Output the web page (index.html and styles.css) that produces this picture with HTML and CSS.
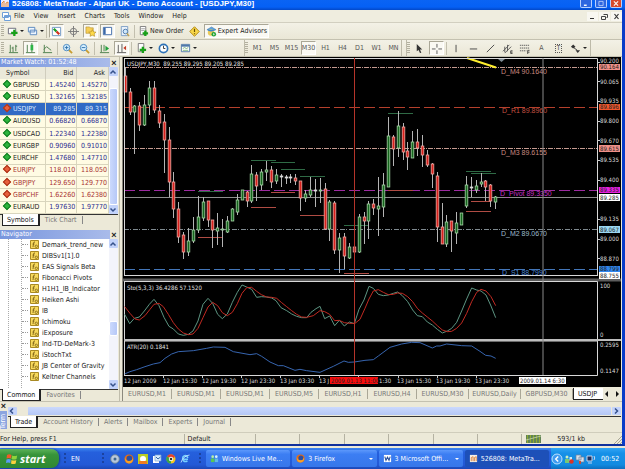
FILE: index.html
```html
<!DOCTYPE html>
<html lang="en">
<head>
<meta charset="utf-8">
<title>526808: MetaTrader - Alpari UK - Demo Account - [USDJPY,M30]</title>
<link rel="stylesheet" href="styles.css">
</head>
<body>
<div class="desktop">
<div class="window">
  <header class="titlebar">
    <svg class="app-icon" viewBox="0 0 8 8"><path d="M0 0h8v7H0z" fill="#eef"/><path d="M1 7V3l2-2v6M5 7V3l2-1v5" stroke="#e0883c" fill="none"/></svg>
    <h1>526808: MetaTrader - Alpari UK - Demo Account - [USDJPY,M30]</h1>
    <div class="caption">
      <button aria-label="Minimize"><svg viewBox="0 0 10 10"><path d="M2 7.500h4" stroke="#fff" stroke-width="2"/></svg></button>
      <button aria-label="Restore"><svg viewBox="0 0 10 10"><path d="M2 2h6v6H2z" stroke="#d5e4ff" fill="none"/></svg></button>
      <button class="close" aria-label="Close"><svg viewBox="0 0 10 10"><path d="M2 2l6 6M8 2l-6 6" stroke="#fff" stroke-width="1.500"/></svg></button>
    </div>
  </header>

  <nav class="menubar">
    <svg class="doc-icon" viewBox="0 0 9 9"><path d="M.5.5h6v5h-6zM2.500 3.500h6v5h-6z" fill="#fff" stroke="#6e9fd8"/><path d="M3 4.500h5" stroke="#6e9fd8"/></svg>
    <button>File</button><button>View</button><button>Insert</button><button>Charts</button><button>Tools</button><button>Window</button><button>Help</button>
    <div class="mdi">
      <button aria-label="Minimize chart"><svg viewBox="0 0 9 9"><path d="M2 6.500h4" stroke="#333"/></svg></button>
      <button aria-label="Restore chart"><svg viewBox="0 0 9 9"><path d="M3.500 2.500h4v3h-1M1.500 4.500h4v3h-4z" fill="none" stroke="#444"/></svg></button>
      <button aria-label="Close chart"><svg viewBox="0 0 9 9"><path d="M2.500 2l4 5M6.500 2l-4 5" stroke="#333" stroke-width="1.200"/></svg></button>
    </div>
  </nav>

  <div class="toolbar first">
    <i class="grip"></i>
    <button class="drop" aria-label="New chart"><svg viewBox="0 0 12 12"><path d="M1.500 2.500h8v6h-8z" fill="#fff" stroke="#667"/><path d="M8 4v7M4.500 7.500h7" stroke="#18a018" stroke-width="2.500"/></svg></button>
    <button class="drop" aria-label="Profiles"><svg viewBox="0 0 12 12"><path d="M1.500 1.500h7v5h-7zM3.500 4.500h7v5h-7z" fill="#eef6ff" stroke="#5686bd"/></svg></button>
    <i class="sep"></i>
    <button class="on" aria-label="Market watch"><svg viewBox="0 0 12 12"><path d="M1.500 1.500h9v9h-9z" fill="#fff" stroke="#6b94c4"/><path d="M3 3l3 3" stroke="#1a9c28" stroke-width="2.500"/><path d="M6 6l3 3" stroke="#d03420" stroke-width="2.500"/></svg></button>
    <button aria-label="Data window"><svg viewBox="0 0 12 12"><circle cx="6" cy="6" r="3.500" fill="none" stroke="#777"/><path d="M6 0v12M0 6h12" stroke="#777"/></svg></button>
    <button class="on" aria-label="Navigator"><svg viewBox="0 0 12 12"><path d="M1 1h4l1 1h3v6H1z" fill="#f6ce55" stroke="#ad8a28" stroke-width=".6"/><path d="M8 4l1.200 2.400 2.800.3-2 1.800.5 2.800L8 10l-2.500 1.300.5-2.800-2-1.800 2.800-.3z" fill="#ffdc4b" stroke="#a8801c" stroke-width=".6"/></svg></button>
    <button class="on" aria-label="Terminal"><svg viewBox="0 0 12 12"><path d="M1.500 1.500h9v8h-9z" fill="#fff" stroke="#3b68a8"/><path d="M2 2h2v7H2z" fill="#3b68a8"/></svg></button>
    <button aria-label="Strategy tester"><svg viewBox="0 0 12 12"><path d="M2.500.5h7v10h-7z" fill="#e9f1fa" stroke="#7a9dc4"/><circle cx="7" cy="6" r="2.500" fill="#cfe8fb" stroke="#4a76a8"/><path d="M8.500 8l2.500 3" stroke="#c3a04c" stroke-width="1.500"/></svg></button>
    <i class="sep"></i>
    <button class="label"><svg viewBox="0 0 12 12"><path d="M2.500.5h6v9h-6z" fill="#fff" stroke="#777"/><path d="M3.500 3h4M3.500 5h3" stroke="#999"/><path d="M8 5v6M5 8h6" stroke="#18a018" stroke-width="2.500"/></svg>New Order</button>
    <button aria-label="MetaEditor"><svg viewBox="0 0 12 12"><path d="M6 .8L11.200 6 6 11.200.8 6z" fill="#f8d648" stroke="#b08510"/><path d="M6 3v3.500M6 8v1" stroke="#6b5000" stroke-width="1.300"/></svg></button>
    <button class="label on"><svg viewBox="0 0 12 12"><path d="M1 4l5-3 5 3-5 2z" fill="#5aa2df" stroke="#316aa0" stroke-width=".5"/><circle cx="5.500" cy="7" r="3.500" fill="#eccb5a"/><path d="M2 5q4 2 7 0v-1H2z" fill="#3b87cc"/><circle cx="8.500" cy="9" r="2.500" fill="#22a43a"/><path d="M8 7.700l1.600 1.300L8 10.300z" fill="#fff"/></svg>Expert Advisors</button>
  </div>

  <div class="toolbar">
    <i class="grip"></i>
    <button aria-label="Bar chart"><svg viewBox="0 0 12 12"><path d="M2.500 2v8M1 10.500h10M5.500 4v6M5.500 5.500H4M8.500 2v7M8.500 3.500H10" fill="none" stroke="#467b46"/></svg></button>
    <button class="on" aria-label="Candlesticks"><svg viewBox="0 0 12 12"><path d="M2.500 2v8M1 10.500h10M7.500 0v10" fill="none" stroke="#467b46"/><path d="M6 2h3v6H6z" fill="#2db447"/></svg></button>
    <button aria-label="Line chart"><svg viewBox="0 0 12 12"><path d="M2.500 2v8M1 10.500h10M2 7l3-3 5 4" fill="none" stroke="#467b46"/></svg></button>
    <i class="sep"></i>
    <button aria-label="Zoom in"><svg viewBox="0 0 12 12"><path d="M7 7l4 4" stroke="#c79d30" stroke-width="2"/><circle cx="5" cy="5" r="3.500" fill="#d6efff" stroke="#4586bf"/><path d="M5 3v4M3 5h4" stroke="#2c6ea8"/></svg></button>
    <button aria-label="Zoom out"><svg viewBox="0 0 12 12"><path d="M7 7l4 4" stroke="#c79d30" stroke-width="2"/><circle cx="5" cy="5" r="3.500" fill="#d6efff" stroke="#4586bf"/><path d="M3 5h4" stroke="#2c6ea8"/></svg></button>
    <i class="sep"></i>
    <button aria-label="Auto scroll"><svg viewBox="0 0 12 12"><path d="M2.500 2v8M1 10.500h10M5.500 2v7" fill="none" stroke="#467b46"/><path d="M7 3l4 3-4 3z" fill="#22a23c"/></svg></button>
    <button class="on" aria-label="Chart shift"><svg viewBox="0 0 12 12"><path d="M2.500 2v8M1 10.500h10M6.500 1v9" fill="none" stroke="#555"/><path d="M11 3L8 5.500 11 8z" fill="#c33b25"/></svg></button>
    <i class="sep"></i>
    <button class="drop" aria-label="Indicators"><svg viewBox="0 0 12 12"><path d="M2.500.5h6v9h-6z" fill="#fff" stroke="#777"/><path d="M7.500 4v7M4 7.500h7" stroke="#18a018" stroke-width="2.500"/></svg></button>
    <button class="drop" aria-label="Periods"><svg viewBox="0 0 12 12"><circle cx="6" cy="6" r="4.500" fill="#fff" stroke="#2f73b8" stroke-width="1.800"/><path d="M6 3v3h2" fill="none" stroke="#333"/></svg></button>
    <button class="drop" aria-label="Templates"><svg viewBox="0 0 12 12"><path d="M1.500 1.500h9v8h-9z" fill="#fff" stroke="#5079a8"/><path d="M1.500 3h9" stroke="#5079a8" stroke-width="2"/><path d="M3 6l2-1 2 1 2-1M3 8h6" stroke="#5aa05a" fill="none" stroke-width=".8"/></svg></button>
    <div class="group frames">
      <i class="grip"></i>
      <button>M1</button><button>M5</button><button>M15</button><button class="on">M30</button><button>H1</button><button>H4</button><button>D1</button><button>W1</button><button>MN</button>
    </div>
    <div class="group draw">
      <i class="grip"></i>
      <button aria-label="Cursor"><svg viewBox="0 0 12 12"><path d="M3 1l6 6H6.500L8 10.500 6.500 11 5 7.500 3 9z" fill="#333"/></svg></button>
      <button class="on" aria-label="Crosshair"><svg viewBox="0 0 12 12"><path d="M6.500 1v4M6.500 8v4M1 6.500h4M8 6.500h4" stroke="#555"/></svg></button>
      <i class="sep"></i>
      <button aria-label="Vertical line"><svg viewBox="0 0 12 12"><path d="M5.500 2v8" stroke="#444"/></svg></button>
      <button aria-label="Horizontal line"><svg viewBox="0 0 12 12"><path d="M2 6.500h8" stroke="#444"/></svg></button>
      <button aria-label="Trendline"><svg viewBox="0 0 12 12"><path d="M2 10l8-8" stroke="#444"/></svg></button>
      <button aria-label="Channel"><svg viewBox="0 0 12 12"><path d="M1 9l7-7M3 11l7-7M3 4v6M6 2v7" stroke="#555"/><path d="M11.500 8.500H9.500v3h2M9.500 10h2" stroke="#222" fill="none" stroke-width=".8"/></svg></button>
      <button aria-label="Fibonacci"><svg viewBox="0 0 12 12"><path d="M1 2.500h10M1 5.500h10M1 8.500h7" stroke="#555" stroke-dasharray="1.500 .7"/><path d="M11.500 8H9.500v4M9.500 10h2" stroke="#222" fill="none" stroke-width=".8"/></svg></button>
      <button>A</button>
      <button><span class="text-tool">T</span></button>
      <button class="drop" aria-label="Arrows"><svg viewBox="0 0 12 12"><path d="M1 4l2.500-2.500L6 4 3.500 6z M6 8h5l-2.500 3z" fill="#333"/><path d="M4 5l4 3" stroke="#333"/></svg></button>
    </div>
  </div>

  <main class="workspace">
    <aside class="side">
      <section class="panel">
        <div class="panel-head"><h2>Market Watch: 01:52:48</h2><button aria-label="Close market watch">×</button></div>
        <div class="scroll-area quotes">
          <table>
            <thead><tr><th>Symbol</th><th>Bid</th><th>Ask</th></tr></thead>
            <tbody>
              <tr><td class="up">GBPUSD</td><td>1.45240</td><td>1.45270</td></tr>
              <tr><td class="up">EURUSD</td><td>1.32165</td><td>1.32185</td></tr>
              <tr class="selected"><td class="down">USDJPY</td><td>89.285</td><td>89.315</td></tr>
              <tr><td class="up">AUDUSD</td><td>0.66820</td><td>0.66870</td></tr>
              <tr><td class="up">USDCAD</td><td>1.22340</td><td>1.22380</td></tr>
              <tr><td class="up">EURGBP</td><td>0.90960</td><td>0.91010</td></tr>
              <tr><td class="up">EURCHF</td><td>1.47680</td><td>1.47710</td></tr>
              <tr class="falling"><td class="down">EURJPY</td><td>118.010</td><td>118.050</td></tr>
              <tr class="falling"><td class="down">GBPJPY</td><td>129.650</td><td>129.770</td></tr>
              <tr class="falling"><td class="down">GBPCHF</td><td>1.62260</td><td>1.62380</td></tr>
              <tr><td class="up">EURAUD</td><td>1.97630</td><td>1.97770</td></tr>
            </tbody>
          </table>
          <div class="scrollbar"><button aria-label="Scroll up"><svg viewBox="0 0 8 8"><path d="M1.500 5.500L4 3l2.500 2.500" /></svg></button><i class="thumb high"></i><button aria-label="Scroll down"><svg viewBox="0 0 8 8"><path d="M1.500 2.500L4 5l2.500-2.500"/></svg></button></div>
        </div>
        <div class="tabs"><button class="active">Symbols</button><button>Tick Chart</button></div>
      </section>
      <section class="panel">
        <div class="panel-head"><h2>Navigator</h2><button aria-label="Close navigator">×</button></div>
        <div class="scroll-area tree">
          <ul>
            <li>Demark_trend_new</li><li>DIBSv1[1].0</li><li>EAS Signals Beta</li><li>Fibonacci Pivots</li><li>H1H1_IB_Indicator</li><li>Heiken Ashi</li><li>IB</li><li>Ichimoku</li><li>iExposure</li><li>Ind-TD-DeMark-3</li><li>iStochTxt</li><li>JB Center of Gravity</li><li>Keltner Channels</li>
          </ul>
          <div class="scrollbar"><button aria-label="Scroll up"><svg viewBox="0 0 8 8"><path d="M1.500 5.500L4 3l2.500 2.500"/></svg></button><i class="thumb low"></i><button aria-label="Scroll down"><svg viewBox="0 0 8 8"><path d="M1.500 2.500L4 5l2.500-2.500"/></svg></button></div>
        </div>
        <div class="tabs"><button class="active">Common</button><button>Favorites</button></div>
      </section>
    </aside>

    <section class="charts">
      <svg class="chart" viewBox="123 57 498 330" role="img" aria-label="USDJPY M30 chart">
        <path d="M123 57h498v330H123z" fill="#000"/>
        <g fill="none" stroke-width="1">
          <path d="M124 67.500H597M124 148.500H597" stroke="#c49a90" stroke-dasharray="5 1 1 1"/>
          <path d="M124 107.500H597" stroke="#b5402c" stroke-dasharray="11 4"/>
          <path d="M124 190.500H597" stroke="#9d2ba0" stroke-dasharray="11 4"/>
          <path d="M124 197.500H597" stroke="#8f8f8f"/>
          <path d="M124 229.500H597" stroke="#7f8a90" stroke-dasharray="5 1 1 2"/>
          <path d="M124 269.500H597" stroke="#4275b8" stroke-dasharray="11 4"/>
          <path d="M251 160.500h25M271 162.500h24M281 169.500h24M300 176.500h25M388 113.500h25M344 225.500h25M466 171.500h25M471 173.500h25M198 191.500h25" stroke="#2f6a45"/>
          <path d="M198 237.500h25M251 207.500h25M271 192.500h24M300 215.500h25M388 190.500h25M344 273.500h25M471 201.500h20M466 211.500h25" stroke="#b04c44"/>
        </g>
        <g id="candles"></g>
        <path d="M467 58l29 9.500" stroke="#ffee2e" stroke-width="2"/>
        <path d="M498 59h7l-3.500 3z" fill="#7d8a92"/>
        <g class="levels">
          <text x="501" y="74" fill="#c98a80">D_M4 90.1640</text>
          <text x="502" y="113" fill="#c25040">D_R1 89.8960</text>
          <text x="501" y="155" fill="#c98a80">D_M3 89.6155</text>
          <text x="500" y="196" fill="#c52fc5">D_Pivot 89.3350</text>
          <text x="501" y="236" fill="#9dbccc">D_M2 89.0670</text>
          <text x="502" y="275" fill="#4a86d8">D_S1 88.7990</text>
        </g>
        <path d="M123 276.500h498" stroke="#000" stroke-width="3"/>
        <path d="M123 280h498" stroke="#5c5c5c" stroke-width="3"/>
        <path d="M124 275.500h473M124.500 58v217.500M124 58.500h473.500V276M124 281.500h473.500V339M124 339.500h473.500M124 341h473.500V375.500H124M124.500 282v93" fill="none" stroke="#d8d8d8"/>
        <path d="M124 340h497" stroke="#bdbdbd" stroke-width="2"/>
        <path d="M163.500 375v3M202.500 375v3M241.500 375v3M280.500 375v3M319.500 375v3M358.500 375v3M398.500 375v3M437.500 375v3M476.500 375v3" stroke="#ccc"/>
        <path d="M597 62.500h3M597 81.500h3M597 101.500h3M597 121.500h3M597 140.500h3M597 160.500h3M597 180.500h3M597 219.500h3M597 239.500h3M597 258.500h3" stroke="#ccc"/>
        <g fill="none" stroke-width="3" transform="translate(120 275) scale(.33333)">
          <polyline stroke="#5d9683" points="14,118 29,146 43,130 58,126 73,108 88,88 102,73 117,92 132,127 147,154 160,162 175,177 190,181 205,178 219,168 234,138 249,88 264,70 278,85 293,118 307,131 322,117 337,82 352,52 366,30 380,36 395,43 410,67 424,65 440,66 455,69 468,77 483,98 500,107 515,117 530,124 545,128 560,128 573,112 588,101 600,94 614,131 629,123 644,152 658,136 673,153 688,141 703,146 717,103 732,75 747,34 760,40 775,58 790,62 805,60 820,55 833,51 847,62 863,80 878,105 892,122 907,125 922,141 937,150 952,163 967,174 982,168 995,160 1010,142 1025,108 1040,72 1055,39 1070,45 1083,48 1098,60 1113,93 1127,128"/>
          <polyline stroke="#c22a22" points="14,95 30,115 45,132 58,135 75,122 90,103 102,88 117,85 130,95 145,118 160,143 175,162 190,174 205,179 219,177 234,160 249,128 264,96 278,82 293,92 307,113 322,122 337,112 352,86 366,55 380,38 395,37 410,49 424,59 440,66 455,67 470,70 485,83 500,95 515,107 530,118 545,126 560,127 580,122 600,107 614,110 629,118 644,137 658,136 673,143 690,145 705,145 720,133 735,100 747,72 760,48 775,44 790,52 805,59 820,58 833,54 847,55 863,65 878,80 892,100 907,114 922,126 937,138 952,152 967,165 982,170 995,169 1010,160 1025,144 1040,115 1055,80 1070,52 1083,43 1098,48 1113,65 1127,92"/>
          <polyline stroke="#3765b0" points="14,297 30,290 50,284 75,275 100,267 120,263 135,250 155,237 175,230 220,227 260,220 280,216 315,217 340,230 390,239 410,236 425,244 450,261 475,272 490,272 525,286 540,283 560,287 600,292 640,274 672,258 685,262 703,261 735,256 760,254 775,243 810,217 845,207 875,202 900,203 937,219 950,213 960,213 980,207 1025,212 1055,213 1080,229 1097,241 1113,243 1127,250"/>
        </g>
        <path d="M354.500 58v317" stroke="#b5342a"/>
        <path d="M543 58v317" stroke="#8a8a8a"/>
        <g class="readout">
          <text x="127" y="66">USDJPY,M30  89.255 89.295 89.205 89.285</text>
          <text x="127" y="290">Sto(5,3,3) 36.4286 57.1520</text>
          <text x="127" y="349">ATR(20) 0.1841</text>
        </g>
        <g class="axis">
          <text x="600" y="63">90.200</text><text x="600" y="84">90.065</text><text x="600" y="103">89.935</text><text x="600" y="123">89.800</text><text x="600" y="143">89.670</text><text x="600" y="162">89.535</text><text x="600" y="182">89.400</text><text x="600" y="221">89.135</text><text x="600" y="241">89.000</text><text x="600" y="261">88.870</text>
          <text x="600" y="288">100</text><text x="600" y="337">0</text><text x="600" y="347">0.2595</text><text x="600" y="373">0.1147</text>
          <text x="124" y="383">12 Jan 2009</text><text x="163" y="383">12 Jan 15:30</text><text x="202" y="383">12 Jan 19:30</text><text x="241" y="383">12 Jan 23:30</text><text x="280" y="383">13 Jan 03:30</text><text x="319" y="383">13 J</text><text x="379" y="383">1:30</text><text x="397" y="383">13 Jan 15:30</text><text x="436" y="383">13 Jan 19:30</text><text x="475" y="383">13 Jan 23:30</text>
        </g>
        <path d="M599 64h21v6h-21zM599 145h21v7h-21z" fill="#f09088"/>
        <path d="M599 104h21v6h-21z" fill="#f0562c"/>
        <path d="M599 187h21v6h-21z" fill="#e81fe0"/>
        <path d="M599 194h21v7h-21zM599 272h21v7h-21zM519 377h47v7h-47z" fill="#fff"/>
        <path d="M599 226h21v7h-21z" fill="#9bd8f2"/>
        <path d="M599 266h21v6h-21z" fill="#2f86ee"/>
        <path d="M330 377h48v7h-48z" fill="#f80c0c"/>
        <g class="axis tags">
          <text x="600" y="69">90.164</text><text x="600" y="109">89.896</text><text x="600" y="151">89.615</text><text x="600" y="192">89.335</text><text x="600" y="200">89.285</text><text x="600" y="232">89.067</text><text x="600" y="271">88.799</text><text x="600" y="278">88.755</text>
          <text x="331" y="383">2009.01.13 11:00</text><text x="520" y="383">2009.01.14 6:30</text>
        </g>
      </svg>
      <div class="chart-tabs">
        <button>EURUSD,M1</button><button>EURUSD,M1</button><button>EURUSD,M1</button><button>EURUSD,M5</button><button>EURUSD,H1</button><button>EURUSD,H4</button><button class="wide">EURUSD,M30</button><button class="wide">EURUSD,Daily</button><button class="wide">GBPUSD,M30</button><button class="active">USDJP</button>
        <div class="pager"><button aria-label="Previous tabs"><svg viewBox="0 0 6 8"><path d="M4 1v6L1 4z"/></svg></button><button aria-label="Next tabs"><svg viewBox="0 0 6 8"><path d="M2 1v6l3-3z"/></svg></button></div>
      </div>
    </section>
  </main>

  <section class="terminal">
    <div class="gutter"><button aria-label="Close terminal">×</button><span>Term</span></div>
    <div class="terminal-body">
      <div class="hscroll"><button aria-label="Scroll left"><svg viewBox="0 0 8 8"><path d="M5 1.500L2.500 4 5 6.500"/></svg></button><i></i><button aria-label="Scroll right"><svg viewBox="0 0 8 8"><path d="M3 1.500L5.500 4 3 6.500"/></svg></button></div>
      <div class="tabs"><button class="active">Trade</button><button>Account History</button><button>Alerts</button><button>Mailbox</button><button>Experts</button><button>Journal</button></div>
    </div>
  </section>

  <footer class="status">
    <span class="help">For Help, press F1</span><span class="profile">Default</span><span></span><span></span><span></span><span></span><span></span><span></span>
    <span class="traffic"><svg viewBox="0 0 15 8"><path d="M0 0h15v8H0z" fill="#315e78"/><path d="M1.500 0v8M4.500 0v8M7.500 0v8M10.500 0v8M13.500 0v8" stroke="#8fa832" stroke-width="2"/><path d="M0 5L15 1" stroke="#d5dfb8" stroke-width=".7"/></svg>593/1 kb</span>
    <svg class="resize" viewBox="0 0 9 9"><path d="M1 9l8-8M4 9l5-5M7 9l2-2" stroke="#a8a594"/></svg>
  </footer>
</div>

<div class="taskbar">
  <button class="start"><svg viewBox="0 0 12 12"><path d="M1 2q2-1.500 4.500 0L5 5.500Q3 4.500.5 5.500z" fill="#f25a29"/><path d="M6.200 2.500q2 1 5 0L10.500 6q-2.500 1-5 0z" fill="#8fd33b"/><path d="M.5 6.500q2.500-1 4.300 0L4.300 10Q2 9 0 10z" fill="#5c9bf5"/><path d="M5.500 7q2.500 1 4.800 0L9.700 10.500q-2.500 1-4.700 0z" fill="#fbd13f"/></svg>start</button>
  <i class="dots"></i><span class="lang">EN</span><i class="dots"></i>
  <div class="quick">
    <button aria-label="Media"><svg viewBox="0 0 10 10"><circle cx="5" cy="5" r="4.300" fill="#b9c8da" stroke="#66809c"/><circle cx="5" cy="5" r="1.500" fill="#3d658f"/></svg></button>
    <button aria-label="Firefox"><svg viewBox="0 0 10 10"><circle cx="5" cy="5" r="4.500" fill="#e86c12"/><circle cx="5.400" cy="4.400" r="2.800" fill="#2c4fa3"/><path d="M1 2q0 5 4 5 3 0 4-3Q9.500 9 5 9.500 0 9 1 2z" fill="#f7a228"/></svg></button>
    <button aria-label="Messenger"><svg viewBox="0 0 10 10"><path d="M0 0h10v10H0z" fill="#b8cd24"/><circle cx="5" cy="5" r="3" fill="#fff"/><path d="M1 7h8v3H1z" fill="#ef7d20"/></svg></button>
    <button aria-label="Mail"><svg viewBox="0 0 10 10"><path d="M1 2h6v7H1z" fill="#fff"/><path d="M3 1h6v6H3z" fill="#d9ebff" stroke="#7aa3cf" stroke-width=".7"/><path d="M4 3l2 2 2.500-2" stroke="#2f66a4" fill="none"/></svg></button>
    <button aria-label="Chrome"><svg viewBox="0 0 10 10"><circle cx="5" cy="5" r="4.500" fill="#f3c822"/><path d="M5 5L1 2.500A4.500 4.500 0 0 1 9 3z" fill="#e2412d"/><path d="M5 5L1 2.500A4.500 4.500 0 0 0 5 9.500z" fill="#3aa547"/><circle cx="5" cy="5" r="2.200" fill="#fff"/><circle cx="5" cy="5" r="1.300" fill="#333"/></svg></button>
    <button aria-label="Internet Explorer"><svg viewBox="0 0 10 10"><path d="M8 5.300H3A2.500 2.500 0 1 1 7.700 4M3 5.500q.5 3 4.500 1.500" fill="none" stroke="#79d0ff" stroke-width="1.600"/><path d="M1 8.500Q3 2 9.500 1" stroke="#d5f1ff" fill="none" stroke-width=".8"/></svg></button>
  </div>
  <i class="dots"></i>
  <div class="tasks">
    <button><svg viewBox="0 0 10 10"><circle cx="3" cy="3" r="1.500" fill="#b8f0a0"/><path d="M1 9V5h4v4z" fill="#58c854"/><circle cx="7" cy="3" r="1.500" fill="#d7f4ff"/><path d="M5.500 9V5H9v4z" fill="#62b8e4"/></svg><span>Windows Live Me...</span></button>
    <button class="grouped"><svg viewBox="0 0 10 10"><circle cx="5" cy="5" r="4.500" fill="#e86c12"/><circle cx="5.400" cy="4.400" r="2.800" fill="#2c4fa3"/><path d="M1 2q0 5 4 5 3 0 4-3Q9.500 9 5 9.500 0 9 1 2z" fill="#f7a228"/></svg><span>3 Firefox</span></button>
    <button class="grouped"><svg viewBox="0 0 10 10"><path d="M1 1h8v8H1z" fill="#fff"/><path d="M2 3l1.300 4L5 3.500 6.700 7 8 3" stroke="#274f9c" fill="none" stroke-width="1.200"/></svg><span>3 Microsoft Offi...</span></button>
    <button class="current"><svg viewBox="0 0 10 10"><path d="M1 1h8v8H1z" fill="#f4efe6"/><path d="M2.500 8V4l2-1v5M6 8V4l2-1v5" stroke="#d8803c" fill="none"/></svg><span>526808: MetaTra...</span></button>
  </div>
  <div class="tray">
    <button aria-label="Show hidden icons"><svg viewBox="0 0 12 12"><circle cx="6" cy="6" r="5" fill="#3f9bf0" stroke="#bfe2ff"/><path d="M7.200 3.500L4.700 6l2.500 2.500" fill="none" stroke="#fff" stroke-width="1.400"/></svg></button>
    <svg viewBox="0 0 10 10"><circle cx="3" cy="3" r="1.500" fill="#cdf0c0"/><path d="M1 9V5h4v4z" fill="#79c874"/><path d="M5.500 7V3H8v4z" fill="#c9e9f5"/><circle cx="7.500" cy="7.500" r="2.200" fill="#dc3224"/></svg>
    <svg viewBox="0 0 10 10"><path d="M1 1h5v5H1zM4 3h5v5H4z" fill="#d8dfe8" stroke="#6b7f9c" stroke-width=".7"/><path d="M5 7v3" stroke="#ce4a35" stroke-width="2"/></svg>
    <svg viewBox="0 0 10 10"><path d="M1 2h5v5H1z" fill="#22315d" stroke="#c5d4ee"/><path d="M2 9h4M8 2q1.500 2 0 4" stroke="#c5d4ee" fill="none"/></svg>
    <time>00:52</time>
  </div>
</div>
</div>
<script src="chart.js"></script>
</body>
</html>
```
FILE: styles.css
```css
* { box-sizing: border-box; }
body {
  margin: 0;
  font: 7px/10px "DejaVu Sans Condensed", Roboto, sans-serif;
  color: #222;
  background: #ece9d8;
}
button {
  margin: 0;
  padding: 0;
  border: 0;
  background: none;
  font: inherit;
  color: inherit;
  white-space: nowrap;
}
h1, h2 { margin: 0; font-size: 7px; font-weight: normal; white-space: nowrap; }
svg { display: block; }
.desktop { min-height: 100vh; display: flex; flex-direction: column; overflow: hidden; }
.window {
  flex: 1;
  display: flex;
  flex-direction: column;
  border-right: 3px solid #0a3cc8;
  border-bottom: 2px solid #10309c;
  margin-bottom: 2px;
}

.titlebar {
  height: 10px;
  margin-right: -3px;
  display: flex;
  align-items: flex-start;
  background: linear-gradient(#0a64f4, #0560f5 70%, #0348c8);
  color: #fff;
}
.app-icon { width: 8px; height: 8px; margin: 0 3px 0 1px; }
.titlebar h1 { flex: 1; font: bold 8px/7px "Liberation Sans", sans-serif; }
.caption { display: flex; gap: 3px; margin-right: 3px; }
.caption button { width: 12px; height: 8px; border: 1px solid #b8d0ff; border-top: 0; border-radius: 0 0 2px 2px; background: #2d66e0; }
.caption .close { background: #d8492a; }
.caption svg { width: 8px; height: 7px; margin: 0 auto; }

.menubar { height: 13px; display: flex; align-items: center; gap: 9px; padding-left: 2px; border-bottom: 1px solid #d2cfc0; background: #efeddf; }
.doc-icon { width: 9px; height: 9px; margin-right: -6px; }
.mdi { margin-left: auto; display: flex; gap: 1px; }
.mdi button { width: 11px; background: #f8f7f1; }
.mdi svg { width: 9px; height: 9px; margin: auto; }

.toolbar { height: 17px; display: flex; align-items: center; gap: 2px; padding-left: 1px; border-bottom: 1px solid #c4c1b0; background: linear-gradient(#f3f1e6, #eae7d6); }
.toolbar svg { width: 11px; height: 11px; flex: none; }
.toolbar button { height: 14px; width: 15px; display: flex; align-items: center; justify-content: center; }
.toolbar .on { background: #faf9f3; border: 1px solid #fff; border-top-color: #aaa796; border-left-color: #aaa796; }
.toolbar .drop::after { content: ""; border: 2px solid transparent; border-top-color: #222; border-bottom: 0; margin-left: 2px; }
.toolbar .drop { width: 20px; }
.first .drop { width: 18px; }
.toolbar .label { width: auto; gap: 1px; padding: 0 1px; }
.grip { width: 3px; height: 12px; background: repeating-linear-gradient(#b3b09f 0 1px, transparent 1px 2px); }
.sep { width: 1px; height: 13px; background: #c2bfae; }
.group { display: flex; align-items: center; gap: 2px; height: 16px; border-left: 1px solid #bdbaa9; border-right: 1px solid #bdbaa9; color: #555; }
.frames { margin-left: 44px; }
.draw { margin-left: 2px; padding-right: 2px; }
.toolbar .group .text-tool { border: 1px dotted #555; line-height: 7px; padding: 0 1px; }

.workspace { display: grid; grid-template-columns: 120px minmax(0, 1fr); flex: 1; column-gap: 2px; }
.side { display: flex; flex-direction: column; gap: 4px; padding-top: 1px; border-right: 1px solid #c0bdac; }
.panel { display: flex; flex-direction: column; padding-right: 1px; }
.panel + .panel { flex: 1; }
.panel-head { display: flex; height: 9px; align-items: center; }
.panel-head h2 { flex: 1; line-height: 9px; padding-left: 1px; color: #fff; background: linear-gradient(90deg, #7896de, #a9bbea); }
.panel-head button { width: 8px; font: bold 9px/8px "Liberation Sans", sans-serif; }
.scroll-area { display: flex; background: #fff; }
.quotes { height: 147px; }
table { flex: 1; height: 100%; border-collapse: collapse; background: #fffbe3; }
th { height: 12px; padding: 0 3px; text-align: right; font-weight: normal; background: #ebe9da; border-right: 1px solid #d0cdbd; }
th:first-child { text-align: left; padding-left: 6px; width: 45px; }
td { padding: 0 1px; line-height: 8px; text-align: right; color: #2a2a90; border: solid #d9d5bd; border-width: 0 1px 1px 0; }
td:first-child { text-align: left; color: #222; white-space: nowrap; }
td:first-child::before { content: ""; display: inline-block; width: 4px; height: 4px; margin: 0 3px 0 3px; transform: rotate(45deg); background: #2cb43c; border: 1px solid #127c22; }
td.down:first-child::before { background: #e8603c; border-color: #a83018; }
.falling td { color: #a83030; }
.selected td, .selected td:first-child { background: #316ac5; color: #dfeaff; }

.scrollbar { width: 9px; display: flex; flex-direction: column; background: #f3f4fb; }
.scrollbar button, .hscroll button { width: 9px; height: 9px; border-radius: 1px; background: #c3d3fb; }
.scrollbar svg, .hscroll svg { width: 8px; height: 8px; fill: none; stroke: #36528c; stroke-width: 1.5; }
.scrollbar .thumb { background: linear-gradient(90deg, #cbd9fd, #b6c8f7); border: 1px solid #fff; border-radius: 2px; }
.thumb.high { margin-top: 12px; flex: 1; }
.thumb.low { margin: auto 0 44px; height: 15px; }

.tree { flex: 1; }
.tree ul { flex: 1; margin: 0; padding: 0; list-style: none; background: repeating-linear-gradient(#aaa 0 1px, transparent 1px 2px) 8px 0 / 1px 100% no-repeat, repeating-linear-gradient(#aaa 0 1px, transparent 1px 2px) 21px 0 / 1px 100% no-repeat; }
.tree li { display: flex; align-items: center; height: 11px; padding-left: 22px; white-space: nowrap; }
.tree li::before { content: ""; width: 6px; border-top: 1px dotted #999; margin-right: 2px; }
.tree li svg { width: 9px; height: 9px; margin-right: 3px; }

.tabs { display: flex; height: 12px; border-top: 1px solid #333; color: #777; }
.tabs button { padding: 0 5px; height: 8px; margin-top: 1px; line-height: 8px; border-right: 1px solid #888; }
.tabs .active { margin: -1px 0 0 2px; height: 12px; line-height: 10px; padding: 0 4px; background: #fff; color: #111; border: solid #222; border-width: 0 2px 1px 1px; }

.charts { border-left: 1px solid #8b897e; margin-right: 1px; min-width: 0; }
.chart { width: 100%; height: auto; font-size: 6px; }
.chart text { white-space: pre; }
.levels { font: 7px "Liberation Sans", sans-serif; }
.readout { fill: #e5e5e5; }
.axis { fill: #ddd; }
.tags { fill: #222; }
.chart-tabs { display: flex; height: 12px; margin-top: 1px; color: #777; }
.chart-tabs > button { flex: 0 0 49px; margin: 1px 0; border-right: 1px solid #aaa797; line-height: 8px; text-align: center; }
.chart-tabs > .wide { flex-basis: 52px; }
.chart-tabs > .active { flex: 1 0 auto; text-align: left; margin: 0; padding-left: 4px; background: #fff; color: #111; border: solid #222; border-width: 0 0 1px 1px; }
.pager { display: flex; gap: 4px; flex: none; padding: 0 1px; align-items: center; }
.pager svg { width: 6px; height: 8px; fill: #111; }

.terminal { display: flex; height: 31px; border-top: 1px solid #c4c1b1; }
.gutter { width: 7px; display: flex; flex-direction: column; align-items: center; }
.gutter button { font: bold 9px/9px "Liberation Sans", sans-serif; }
.gutter span { writing-mode: vertical-rl; transform: rotate(180deg); color: #fff; background: #8ba4df; line-height: 7px; height: 18px; }
.terminal-body { flex: 1; padding: 5px 1px 0 1px; }
.hscroll { display: flex; gap: 1px; padding-bottom: 1px; }
.hscroll i { flex: 1; margin-left: 10px; height: 8px; background: linear-gradient(#cbd9fd, #b4c7f6); }
.hscroll button { height: 8px; }

.status { display: flex; height: 12px; line-height: 11px; border-top: 1px solid #d0cdbc; }
.status span { flex: 43 1 0; border-right: 1px solid #b5b2a2; margin-top: 1px; min-width: 0; white-space: nowrap; }
.status .help { flex-grow: 182; }
.status .profile { flex-grow: 67; padding-left: 3px; }
.status .traffic { flex-grow: 86; display: flex; gap: 16px; border: 0; padding-left: 4px; }
.traffic svg { width: 15px; height: 8px; margin-top: 1px; }
.resize { width: 9px; height: 9px; align-self: flex-end; }

.taskbar { height: 21px; display: flex; align-items: center; background: linear-gradient(#3c86f0, #2560dd 20%, #2359d6 80%, #1c48b6); color: #fff; }
.start { display: flex; align-items: center; gap: 2px; width: 59px; height: 19px; padding-left: 6px; border-radius: 0 8px 8px 0; background: linear-gradient(#5cb258, #37943a 30%, #2f8832); font: italic bold 11px "Open Sans", sans-serif; box-shadow: 1px 0 2px #173c8c; }
.start svg { width: 12px; height: 12px; }
.dots { width: 2px; height: 12px; margin: 0 5px; background: repeating-linear-gradient(#1b429f 0 2px, transparent 2px 4px); }
.lang { width: 26px; }
.quick { display: flex; gap: 4px; padding: 0 4px 0 1px; }
.quick svg { width: 10px; height: 10px; }
.tasks { flex: 1; min-width: 0; display: flex; gap: 2px; align-self: stretch; padding: 2px 0; }
.tasks button { flex: 1 1 0; min-width: 0; display: flex; align-items: center; gap: 3px; padding: 0 4px; border-radius: 2px; background: linear-gradient(#5c98fb, #3c7ef3 25%, #3777ea); }
.tasks svg { width: 9px; height: 9px; flex: none; }
.tasks .grouped::after { content: ""; margin-left: auto; border: 2px solid transparent; border-top-color: #fff; border-bottom: 0; }
.tasks .current { background: #1d50b8; }
.tray { flex: none; display: flex; align-items: center; gap: 1px; width: 74px; height: 21px; margin-left: 2px; background: linear-gradient(#32a5f4, #1690e8 25%, #128ae0 80%, #0f6dbd); }
.tray svg { width: 10px; height: 10px; }
.tray button svg { width: 12px; height: 12px; }
.tray time { margin-left: 4px; }
```
FILE: chart.js
```js
// One row per 30-minute bar: high, low, body top, body bottom (y), direction.
const bars = `67 92 76 92 r|88 115 92 112 r|105 154 106 112 g|102 131 106 125 r|95 126 105 125 g|81 115 88 105 g|81 113 88 110 r|105 128 111 123 r
114 173 122 140 r|127 197 140 182 r|172 218 182 209 r|202 243 209 237 r|232 259 235 252 r|228 256 241 252 g|217 243 230 241 g|196 233 217 230 g
197 221 202 218 g|201 227 201 220 r|220 248 220 230 r|213 245 228 231 g|219 247 229 230 g|216 233 221 232 g|208 221 209 221 g|194 215 200 212 g
190 200 190 200 g|191 207 192 201 r|165 203 174 201 g|172 201 175 186 r|169 190 172 185 g|161 181 170 172 g|166 188 170 182 r|169 184 175 181 g
174 187 176 177 w|175 184 177 178 w|174 183 177 178 w|174 185 178 181 r|181 211 181 198 r|190 202 194 198 g|177 197 190 195 g|179 207 190 191 w
178 203 190 191 g|183 230 189 229 r|200 241 202 229 g|201 254 203 250 r|233 273 238 250 g|233 269 237 256 r|243 259 247 258 g|224 255 247 252 r
214 253 217 252 g|212 244 217 221 r|201 239 204 221 g|199 215 204 208 r|177 236 206 209 g|173 217 185 207 g|117 187 136 187 g|135 166 137 149 r
111 157 126 148 g|123 160 127 152 r|142 170 151 157 r|131 158 142 158 g|129 156 142 148 r|135 167 146 155 r|150 167 155 165 r|163 188 164 174 r
172 242 176 227 r|203 244 227 244 r|215 247 222 244 g|221 252 221 231 r|212 244 223 233 g|213 225 213 225 g|176 208 185 206 g|177 197 187 188 w
180 193 186 190 g|173 187 182 184 g|180 201 181 187 r|184 207 185 201 r|196 209 197 202 g`.split(/[|\n]/);

const fills = { r: "#d8201c", g: "#14661c", w: "#ddd" };
const edges = { r: "#f0aaa4", g: "#a8d8a8", w: "#ddd" };
const ns = "http://www.w3.org/2000/svg";
const layer = document.getElementById("candles");

function add(tag, attrs, parent) {
  const el = document.createElementNS(ns, tag);
  for (const key in attrs) el.setAttribute(key, attrs[key]);
  parent.appendChild(el);
}

bars.forEach((row, i) => {
  const [high, low, top, bottom, kind] = row.split(" ");
  const x = Math.floor(125.2 + i * 4.875) + 0.5;
  add("path", { d: `M${x} ${high}V${low}`, stroke: "#b4b4b4" }, layer);
  add("rect", {
    x: x - 1.3, y: top, width: 2.6, height: Math.max(1, bottom - top),
    fill: fills[kind], stroke: edges[kind], "stroke-width": 0.8
  }, layer);
});

document.querySelectorAll(".tree li").forEach((item) => {
  const icon = document.createElementNS(ns, "svg");
  icon.setAttribute("viewBox", "0 0 9 9");
  add("path", { d: "M.5.5h8v8h-8z", fill: "#f7d95c", stroke: "#a98a24" }, icon);
  add("path", { d: "M5 2q-1.500-.5-1.500 1.500L3 7M2.500 4h2", stroke: "#6d5410", fill: "none", "stroke-width": 0.8 }, icon);
  add("circle", { cx: 6.3, cy: 6.3, r: 1.2, stroke: "#6d5410", fill: "none", "stroke-width": 0.7 }, icon);
  item.prepend(icon);
});
```
